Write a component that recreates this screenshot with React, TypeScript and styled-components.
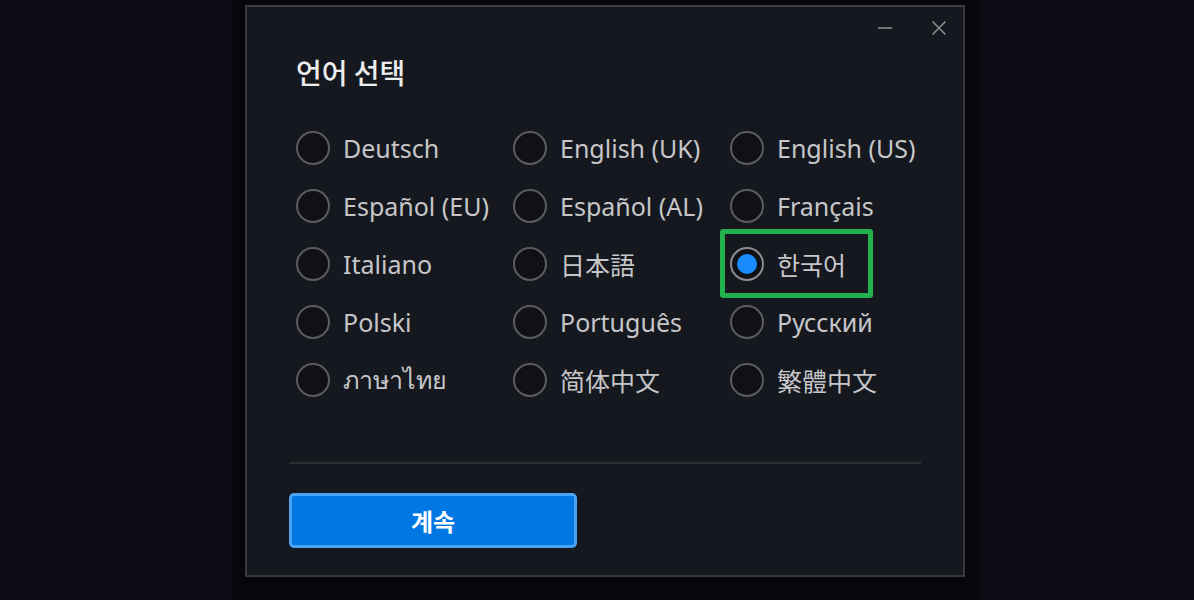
import styled, { createGlobalStyle } from "styled-components"

const GlobalStyle = createGlobalStyle`
	html, body {
		margin: 0;
		padding: 0;
		height: 100%;
		background: #0b0a15;
		font-family: "Noto Sans", "Noto Sans CJK KR", sans-serif;
	}
	#root {
		height: 100%;
	}
`

const languages = [
	"Deutsch",
	"English (UK)",
	"English (US)",
	"Español (EU)",
	"Español (AL)",
	"Français",
	"Italiano",
	"日本語",
	"한국어",
	"Polski",
	"Português",
	"Русский",
	"ภาษาไทย",
	"简体中文",
	"繁體中文",
]

const selected = "한국어"

const App = () => {
	return (
		<>
			<GlobalStyle />
			<Page>
				<Backdrop>
					<Dialog>
						<TitleBar>
							<WinButton aria-label="minimize">
								<svg width="16" height="16" viewBox="0 0 16 16">
									<line x1="1" y1="8" x2="15" y2="8" stroke="#8a8c90" strokeWidth="1.6" />
								</svg>
							</WinButton>
							<WinButton aria-label="close">
								<svg width="16" height="16" viewBox="0 0 16 16">
									<path d="M1.5 1.5 L14.5 14.5 M14.5 1.5 L1.5 14.5" stroke="#8a8c90" strokeWidth="1.6" />
								</svg>
							</WinButton>
						</TitleBar>
						<Title>언어 선택</Title>
						<Grid>
							{languages.map((lang) => (
								<Option key={lang} $highlight={lang === selected}>
									<Radio $checked={lang === selected} />
									<Label>{lang}</Label>
								</Option>
							))}
						</Grid>
						<Divider />
						<Footer>
							<ContinueButton>계속</ContinueButton>
						</Footer>
					</Dialog>
				</Backdrop>
			</Page>
		</>
	)
}

export default App

const Page = styled.div`
	height: 100%;
	display: flex;
`

const Backdrop = styled.div`
	margin-left: 232px;
	width: 748px;
	height: 600px;
	background: #06060b;
	padding-top: 5px;
	box-sizing: border-box;
`

const Dialog = styled.div`
	margin-left: 13px;
	width: 720px;
	height: 572px;
	box-sizing: border-box;
	background: #15181f;
	border: 2px solid #35383d;
	border-top-color: #3a3d42;
	display: flex;
	flex-direction: column;
	padding: 0 42px;
`

const TitleBar = styled.div`
	height: 41px;
	display: flex;
	justify-content: flex-end;
	align-items: center;
	gap: 38px;
	margin-right: -26px;
`

const WinButton = styled.div`
	width: 16px;
	height: 16px;
	display: flex;
	svg {
		display: block;
	}
`

const Title = styled.h1`
	margin: 7px 0 0 7px;
	font-size: 28px;
	font-weight: 500;
	line-height: 34px;
	color: #ececec;
	font-family: "Noto Sans CJK KR", "Noto Sans", sans-serif;
`

const Grid = styled.div`
	margin: 30px 0 0 7px;
	display: grid;
	grid-template-columns: repeat(3, 217px);
	grid-auto-rows: 58px;
`

const Option = styled.div<{ $highlight?: boolean }>`
	position: relative;
	display: flex;
	align-items: center;
	gap: 13px;
	${({ $highlight }) =>
		$highlight &&
		`
		&::after {
			content: "";
			position: absolute;
			left: -10px;
			top: -6px;
			width: 153px;
			height: 69px;
			box-sizing: border-box;
			border: 5px solid #22b14c;
			border-radius: 3px;
		}
	`}
`

const Radio = styled.span<{ $checked?: boolean }>`
	width: 34px;
	height: 34px;
	box-sizing: border-box;
	border-radius: 50%;
	border: 2px solid ${({ $checked }) => ($checked ? "#8e8e8e" : "#5c5c5e")};
	background: #101116;
	display: flex;
	align-items: center;
	justify-content: center;
	flex-shrink: 0;
	&::before {
		content: "";
		display: ${({ $checked }) => ($checked ? "block" : "none")};
		width: 20px;
		height: 20px;
		border-radius: 50%;
		background: #1a8cff;
	}
`

const Label = styled.span`
	font-size: 25px;
	color: #c6c6c8;
	white-space: nowrap;
	font-family: "Noto Sans", "Noto Sans CJK KR", sans-serif;
`

const Divider = styled.hr`
	margin: 53px 0 0 0;
	border: 0;
	height: 2px;
	background: #2c2e33;
`

const Footer = styled.div`
	padding-top: 29px;
	display: flex;
`

const ContinueButton = styled.button`
	width: 288px;
	height: 55px;
	box-sizing: border-box;
	background: #0077e2;
	border: 3px solid #4aa3f5;
	border-radius: 5px;
	color: #ffffff;
	font-size: 24px;
	font-weight: 700;
	font-family: "Noto Sans CJK KR", sans-serif;
	cursor: pointer;
`
